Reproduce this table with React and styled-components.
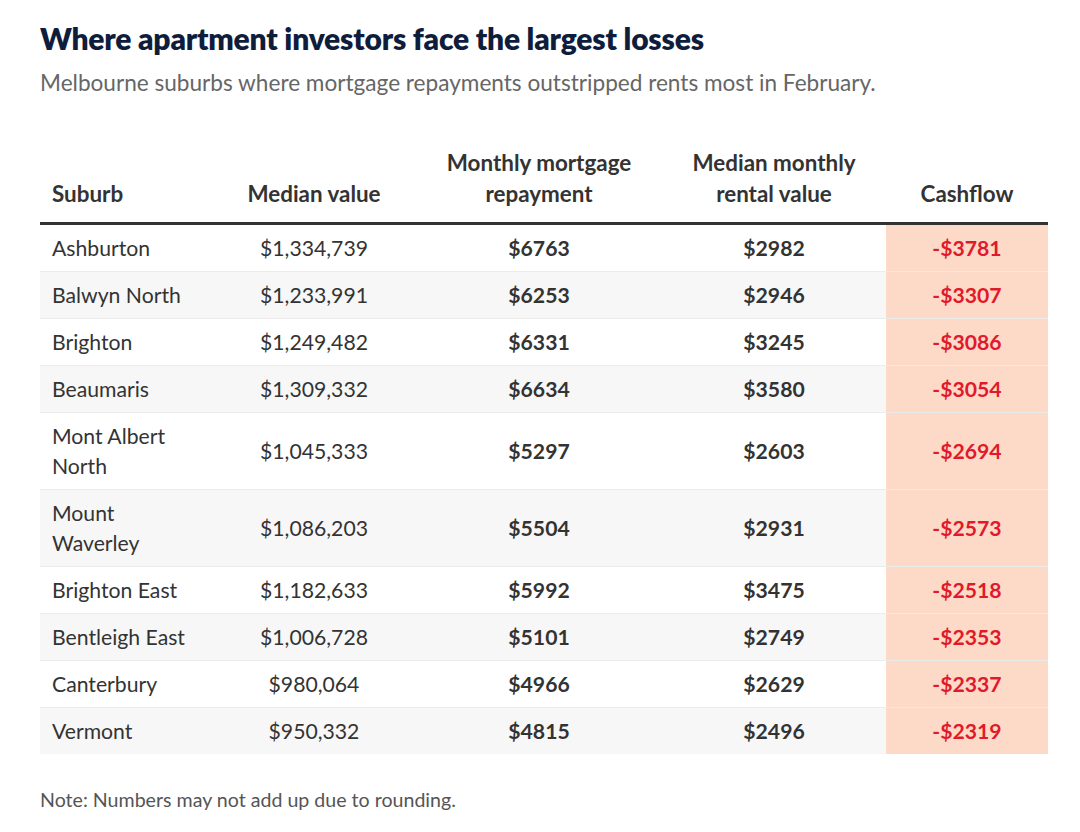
import styled, { createGlobalStyle } from "styled-components";

const GlobalStyle = createGlobalStyle`
  html, body {
    margin: 0;
    padding: 0;
    background: #ffffff;
  }
  body {
    font-family: "Lato", "Liberation Sans", sans-serif;
    color: #333333;
  }
`;

const ROWS = [
  ["Ashburton", "$1,334,739", "$6763", "$2982", "-$3781"],
  ["Balwyn North", "$1,233,991", "$6253", "$2946", "-$3307"],
  ["Brighton", "$1,249,482", "$6331", "$3245", "-$3086"],
  ["Beaumaris", "$1,309,332", "$6634", "$3580", "-$3054"],
  ["Mont Albert North", "$1,045,333", "$5297", "$2603", "-$2694"],
  ["Mount Waverley", "$1,086,203", "$5504", "$2931", "-$2573"],
  ["Brighton East", "$1,182,633", "$5992", "$3475", "-$2518"],
  ["Bentleigh East", "$1,006,728", "$5101", "$2749", "-$2353"],
  ["Canterbury", "$980,064", "$4966", "$2629", "-$2337"],
  ["Vermont", "$950,332", "$4815", "$2496", "-$2319"],
];

const Page = styled.main`
  padding: 20px 32px 30px 40px;
`;

const Title = styled.h1`
  margin: 0;
  font-size: 30px;
  line-height: 36px;
  font-weight: 800;
  color: #0f1d3d;
  letter-spacing: -0.2px;
`;

const Subtitle = styled.p`
  margin: 13px 0 0;
  font-size: 22.6px;
  line-height: 28px;
  color: #666666;
`;

const Table = styled.table`
  width: 1008px;
  margin-top: 50px;
  border-collapse: collapse;
  table-layout: fixed;
  font-size: 21.2px;
`;

const HeadCell = styled.th`
  padding: 0 12px 13px;
  font-size: 22.4px;
  line-height: 31px;
  font-weight: 700;
  color: #333333;
  vertical-align: bottom;
  text-align: ${(p) => (p.$left ? "left" : "center")};
  border-bottom: 3px solid #333333;
`;

const Row = styled.tr`
  background: ${(p) => (p.$even ? "#f7f7f7" : "#ffffff")};
  border-bottom: 1px solid #ebebeb;

  &:last-child {
    border-bottom: none;
  }
`;

const Cell = styled.td`
  padding: 8px 12px;
  line-height: 30px;
  vertical-align: middle;
  text-align: ${(p) => (p.$left ? "left" : "center")};
  font-weight: ${(p) => (p.$bold ? 700 : 400)};
  color: #333333;
`;

const CashCell = styled(Cell)`
  background: #fdd9c7;
  color: #e0192b;
  font-weight: 700;
`;

const Note = styled.p`
  margin: 34px 0 0;
  font-size: 19.6px;
  line-height: 24px;
  color: #555555;
`;

export default function App() {
  return (
    <>
      <GlobalStyle />
      <Page>
        <Title>Where apartment investors face the largest losses</Title>
        <Subtitle>
          Melbourne suburbs where mortgage repayments outstripped rents most in February.
        </Subtitle>
        <Table>
          <colgroup>
            <col style={{ width: 172 }} />
            <col style={{ width: 204 }} />
            <col style={{ width: 246 }} />
            <col style={{ width: 224 }} />
            <col style={{ width: 162 }} />
          </colgroup>
          <thead>
            <tr>
              <HeadCell $left>Suburb</HeadCell>
              <HeadCell>Median value</HeadCell>
              <HeadCell>
                Monthly mortgage
                <br />
                repayment
              </HeadCell>
              <HeadCell>
                Median monthly
                <br />
                rental value
              </HeadCell>
              <HeadCell>Cashflow</HeadCell>
            </tr>
          </thead>
          <tbody>
            {ROWS.map((r, i) => (
              <Row key={r[0]} $even={i % 2 === 1}>
                <Cell $left>{r[0]}</Cell>
                <Cell>{r[1]}</Cell>
                <Cell $bold>{r[2]}</Cell>
                <Cell $bold>{r[3]}</Cell>
                <CashCell>{r[4]}</CashCell>
              </Row>
            ))}
          </tbody>
        </Table>
        <Note>Note: Numbers may not add up due to rounding.</Note>
      </Page>
    </>
  );
}
